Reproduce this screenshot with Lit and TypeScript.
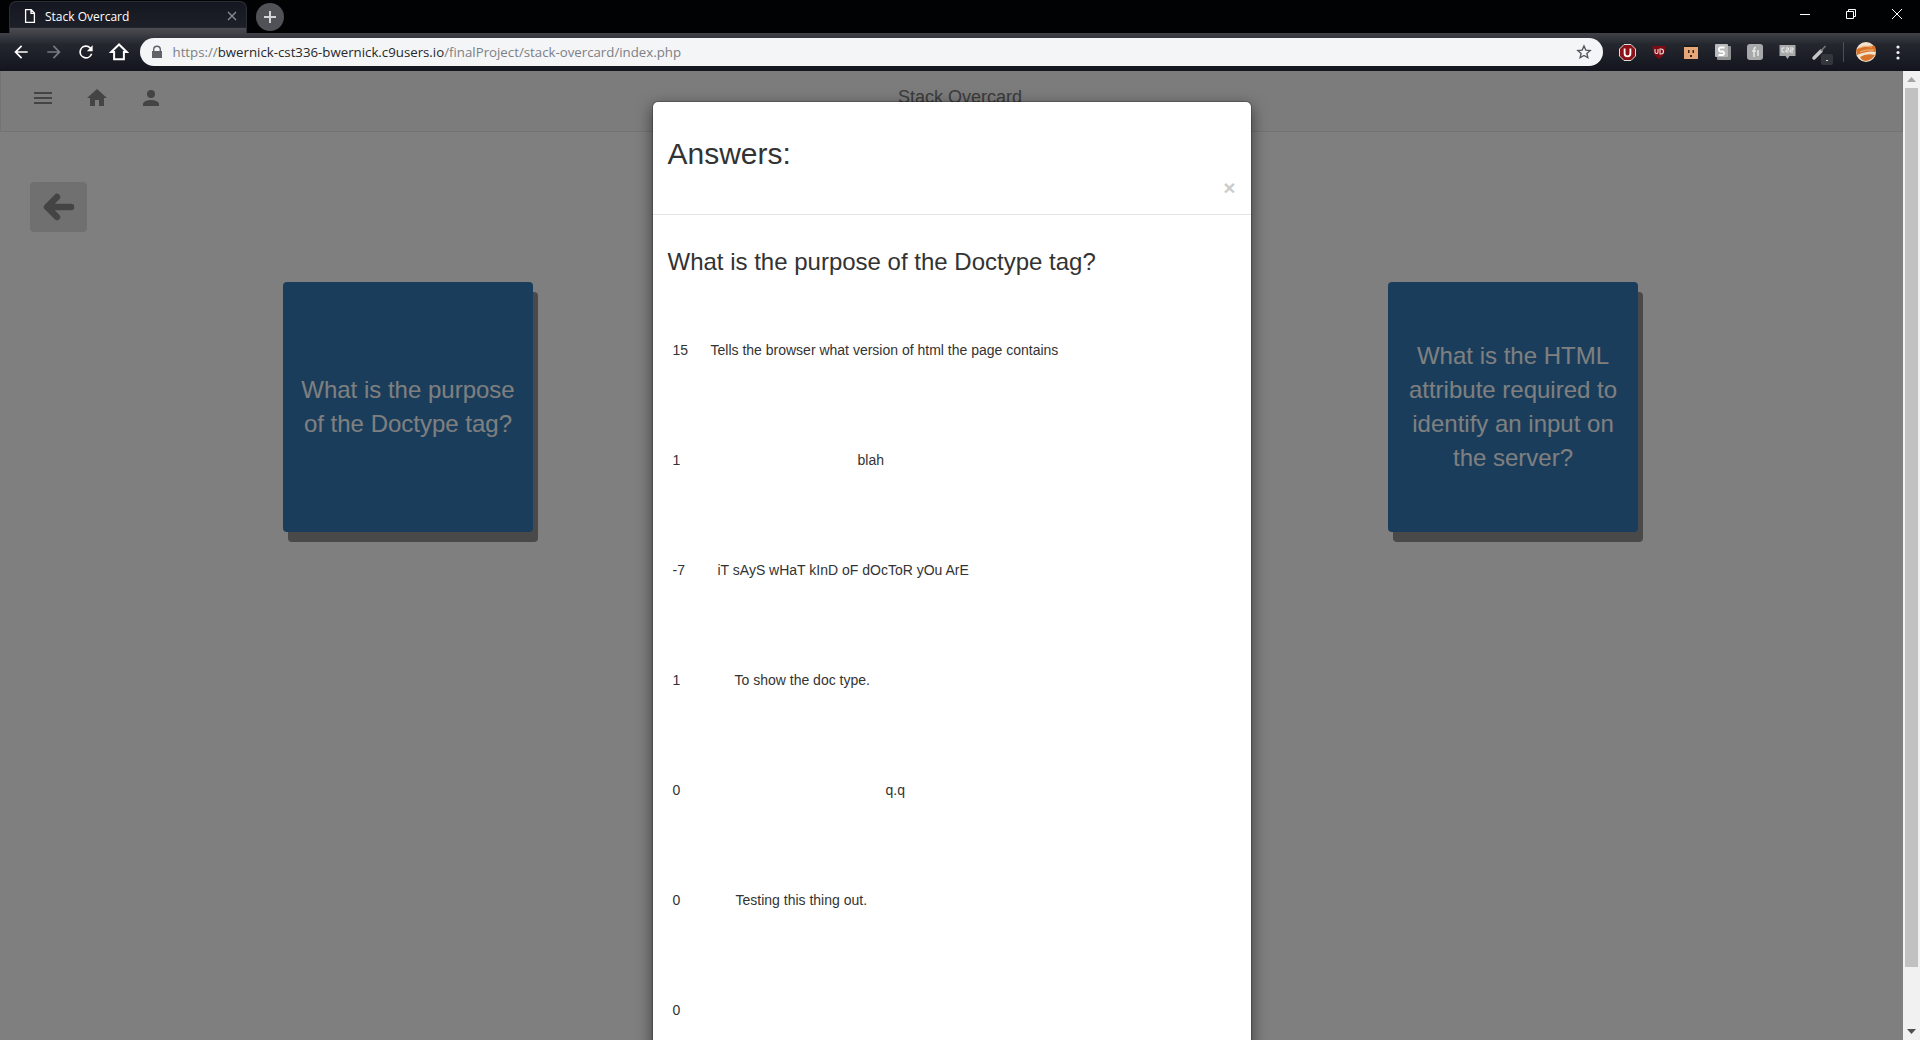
import { LitElement, html, css, svg } from 'lit';
import { customElement } from 'lit/decorators.js';

const answers = [
  { votes: '15', text: 'Tells the browser what version of html the page contains', indent: 38 },
  { votes: '1', text: 'blah', indent: 185 },
  { votes: '-7', text: 'iT sAyS wHaT kInD oF dOcToR yOu ArE', indent: 45 },
  { votes: '1', text: 'To show the doc type.', indent: 62 },
  { votes: '0', text: 'q.q', indent: 213 },
  { votes: '0', text: 'Testing this thing out.', indent: 63 },
  { votes: '0', text: '', indent: 0 },
];

const cards = [
  'What is the purpose of the Doctype tag?',
  'What is the HTML attribute required to identify an input on the server?',
];

const icon = (d: unknown, size = 24, box = 24) => html`
  <svg width=${size} height=${size} viewBox="0 0 ${box} ${box}" fill="currentColor">${d}</svg>
`;

@customElement('browser-chrome')
export class BrowserChrome extends LitElement {
  static styles = css`
    :host {
      display: block;
      font-family: 'Open Sans', 'Liberation Sans', sans-serif;
      color: #fff;
    }

    .tabstrip {
      height: 33px;
      background: #010204;
      display: flex;
      align-items: flex-end;
      padding-left: 9px;
    }

    .tab {
      width: 238px;
      height: 32px;
      box-sizing: border-box;
      background: linear-gradient(#14171f, #1d2029 82%, #4a4c52 84%, #404248);
      border-radius: 7px 7px 0 0;
      border: 1px solid #2c2f37;
      border-bottom: 0;
      display: flex;
      align-items: center;
      padding: 0 6px 3px 13px;
      gap: 8px;
      font-size: 12px;
    }

    .tab-title {
      flex: 1;
    }

    .tab-close {
      color: #8b8d93;
      display: flex;
    }

    .new-tab {
      width: 28px;
      height: 28px;
      margin: 0 0 2px 9px;
      border-radius: 50%;
      background: #505257;
      color: #d4d4d6;
      display: flex;
      align-items: center;
      justify-content: center;
    }

    .window-controls {
      margin-left: auto;
      align-self: flex-start;
      display: flex;
    }

    .window-controls div {
      width: 46px;
      height: 28px;
      display: flex;
      align-items: center;
      justify-content: center;
    }

    .toolbar {
      height: 38px;
      box-sizing: border-box;
      background: linear-gradient(#404248, #25272f 30%, #12151d);
      display: flex;
      align-items: center;
      padding-left: 11px;
    }

    .nav {
      width: 32.5px;
      display: flex;
      color: #fff;
    }

    .nav.off {
      color: #777a80;
    }

    .omnibox {
      width: 1463px;
      height: 28px;
      margin-left: -1px;
      border-radius: 14px;
      background: #f4f5f6;
      display: flex;
      align-items: center;
      padding: 0 11px;
      box-sizing: border-box;
      color: #5f6368;
      font-size: 13.25px;
      font-family: 'Open Sans', sans-serif;
    }

    .url {
      flex: 1;
      margin-left: 9.5px;
      color: #7c8085;
    }

    .url b {
      font-weight: 400;
      color: #26282b;
    }

    .extensions {
      display: flex;
      align-items: center;
      margin-left: 8px;
    }

    .ext {
      width: 32px;
      display: flex;
      justify-content: center;
    }

    .divider {
      width: 1px;
      height: 20px;
      background: #4b4e55;
      margin: 0 12px 0 8px;
    }

    .menu-dots {
      margin-left: 20px;
    }
  `;

  render() {
    return html`
      <div class="tabstrip">
        <div class="tab">
          <svg width="14" height="16" viewBox="0 0 14 16" fill="none" stroke="#fff" stroke-width="1.3">
            <path d="M2.6 1.7h5.6l3.2 3.4v9.2H2.6zM8 1.7v3.6h3.4" />
          </svg>
          <span class="tab-title">Stack Overcard</span>
          <span class="tab-close">
            <svg width="16" height="16" viewBox="0 0 16 16" fill="none" stroke="currentColor" stroke-width="1.3">
              <path d="M4 4l8 8M12 4l-8 8" />
            </svg>
          </span>
        </div>
        <div class="new-tab">
          <svg width="14" height="14" viewBox="0 0 14 14" fill="none" stroke="currentColor" stroke-width="2">
            <path d="M7 1v12M1 7h12" />
          </svg>
        </div>
        <div class="window-controls">
          <div>
            <svg width="12" height="12" viewBox="0 0 12 12" stroke="#fff"><path d="M1 6.5h10" /></svg>
          </div>
          <div>
            <svg width="12" height="12" viewBox="0 0 12 12" fill="none" stroke="#fff">
              <path d="M1.5 3.5h7v7h-7zM3.5 3.5v-2h7v7h-2" />
            </svg>
          </div>
          <div>
            <svg width="12" height="12" viewBox="0 0 12 12" fill="none" stroke="#fff"><path d="M1 1l10 10M11 1L1 11" /></svg>
          </div>
        </div>
      </div>
      <div class="toolbar">
        <span class="nav">${icon(svg`<path d="M20 11H7.8l5.6-5.6L12 4l-8 8 8 8 1.4-1.4L7.8 13H20z" />`, 20)}</span>
        <span class="nav off">${icon(svg`<path d="M4 11h12.2l-5.6-5.6L12 4l8 8-8 8-1.4-1.4 5.6-5.6H4z" />`, 20)}</span>
        <span class="nav">${icon(svg`<path d="M17.65 6.35A8 8 0 1 0 19.73 14h-2.08A6 6 0 1 1 12 6c1.66 0 3.14.69 4.22 1.78L13 11h7V4z" />`, 20)}</span>
        <span class="nav">
          <svg width="20" height="20" viewBox="0 0 18 18" fill="none" stroke="currentColor" stroke-width="1.8">
            <path d="M9 2.2L2 9h2.6v6.6h8.8V9H16z" />
          </svg>
        </span>
        <div class="omnibox">
          <svg width="12" height="14" viewBox="0 0 12 14" fill="#5f6368">
            <path d="M2 6V4.5a4 4 0 0 1 8 0V6h1v7H1V6zm1.4 0h5.2V4.5a2.6 2.6 0 0 0-5.2 0z" />
          </svg>
          <span class="url">https://<b>bwernick-cst336-bwernick.c9users.io</b>/finalProject/stack-overcard/index.php</span>
          <svg width="16" height="16" viewBox="0 0 24 24" fill="none" stroke="#50545a" stroke-width="2">
            <path d="M12 3l2.7 6.1 6.6.6-5 4.4 1.5 6.5L12 17.2 6.2 20.6l1.5-6.5-5-4.4 6.6-.6z" />
          </svg>
        </div>
        <div class="extensions">
          <span class="ext">
            <svg width="17" height="17" viewBox="0 0 17 17">
              <path d="M5 .5h7L16.5 5v7L12 16.5H5L.5 12V5z" fill="#8c1217" stroke="#ddd" />
              <path d="M5.6 4.5v5a2.9 2.9 0 0 0 5.8 0v-5" fill="none" stroke="#fff" stroke-width="1.8" />
            </svg>
          </span>
          <span class="ext">
            <svg width="16" height="16" viewBox="0 0 16 16">
              <path d="M1.5 1.5Q8 2.5 14.5 1.5 15 11 8 15 1 11 1.5 1.5z" fill="#7d0c14" />
              <path d="M4 5v3a1.5 1.5 0 0 0 3 0V5M9 5v5h1a2.5 2.5 0 0 0 0-5z" fill="none" stroke="#f3dcdc" stroke-width="1.1" />
            </svg>
          </span>
          <span class="ext">
            <svg width="16" height="16" viewBox="0 0 16 16">
              <rect x="1" y="2" width="14" height="13" fill="#e6a878" />
              <rect x="1" y="1" width="14" height="2" fill="#1b1b1b" />
              <path d="M5 6h1.5v3H5zM9.5 6H11v3H9.5zM7 11h2v2H7z" fill="#3a2417" />
            </svg>
          </span>
          <span class="ext">
            <svg width="18" height="18" viewBox="0 0 18 18">
              <rect x="3" y="3" width="14" height="14" rx="1" fill="#8f9092" />
              <rect x="1" y="1" width="13" height="13" rx="1" fill="#b9babb" />
              <path d="M10.5 4.500H6L5 5.500v2l1 1h3l1 1v1.500l-1 1H4.500" fill="none" stroke="#fff" stroke-width="1.8" />
            </svg>
          </span>
          <span class="ext">
            <svg width="16" height="16" viewBox="0 0 16 16">
              <rect width="16" height="16" rx="3" fill="#a7a8aa" />
              <path d="M7 13V6q0-2.5 2-2.5M5 7h4M11 6v6" fill="none" stroke="#e6e6e6" stroke-width="1.5" />
            </svg>
          </span>
          <span class="ext">
            <svg width="17" height="17" viewBox="0 0 17 17">
              <path d="M.5 1h16v11h-6L8.5 15l-2-3h-6z" fill="#a9aaac" />
              <path d="M3 4h2.5M3 4v4h2.5M7 4h2.5v2H7v2h2.5M11 4h3v2h-3v2h3" fill="none" stroke="#efefef" stroke-width="1" />
            </svg>
          </span>
          <span class="ext">
            <svg width="28" height="26" viewBox="0 0 28 26">
              <path d="M9 19l7-7" stroke="#c4c5c7" stroke-width="3.5" stroke-linecap="round" />
              <path d="M16 12l4.500-5" stroke="#77787b" stroke-width="1.5" />
              <rect x="16" y="15" width="12" height="11" rx="2" fill="#33363a" />
              <rect x="21" y="21" width="2" height="1" fill="#ddd" />
            </svg>
          </span>
          <span class="divider"></span>
          <svg width="20" height="20" viewBox="0 0 20 20">
            <circle cx="10" cy="10" r="10" fill="#f3e2cd" />
            <path d="M0 8Q6 3 19 4 20 8 20 10 12 8 1 13zM4 15Q10 11 19 13 16 18 10 19 6 19 4 15z" fill="#d8742a" />
            <path d="M3 6Q9 3 16 5M4 10Q10 7 18 8" fill="none" stroke="#f2b27a" />
          </svg>
          <svg class="menu-dots" width="4" height="15" viewBox="0 0 4 15" fill="#f2f2f2">
            <circle cx="2" cy="2" r="1.6" /><circle cx="2" cy="7.5" r="1.6" /><circle cx="2" cy="13" r="1.6" />
          </svg>
        </div>
      </div>
    `;
  }
}

@customElement('app-root')
export class AppRoot extends LitElement {
  static styles = css`
    :host {
      display: block;
      width: 1920px;
      height: 1040px;
      overflow: hidden;
      font-family: 'Liberation Sans', Arial, sans-serif;
      color: #333;
      background: #fff;
    }

    .viewport {
      display: flex;
      height: 969px;
    }

    .page {
      position: relative;
      flex: 1;
      overflow: hidden;
      background: #fff;
    }

    .navbar {
      height: 61px;
      box-sizing: border-box;
      background: #f8f8f8;
      border: 1px solid #e7e7e7;
      border-top: 0;
      position: relative;
      display: flex;
      padding: 15px 0 0 30px;
      gap: 30px;
      color: #888;
    }

    .brand {
      position: absolute;
      left: 897px;
      top: 15px;
      font-size: 18px;
      line-height: 22px;
      color: #777;
    }

    .content {
      padding: 50px 0 0 30px;
    }

    .back {
      width: 57px;
      height: 50px;
      background: #e0e0e0;
      border-radius: 4px;
      display: flex;
      align-items: center;
      justify-content: center;
      color: #888;
    }

    .cards {
      display: flex;
      padding-left: 253px;
      gap: 855px;
      margin-top: 50px;
    }

    .card {
      width: 250px;
      height: 250px;
      flex: none;
      box-sizing: border-box;
      padding: 0 15px;
      border-radius: 4px;
      background: #337ab7;
      box-shadow: 5px 10px 0 #939393;
      color: #fff;
      font-size: 24px;
      line-height: 34px;
      text-align: center;
      display: flex;
      align-items: center;
      justify-content: center;
    }

    .backdrop {
      position: absolute;
      inset: 0;
      background: rgba(0, 0, 0, 0.5);
    }

    .modal {
      position: absolute;
      left: 651.5px;
      top: 30px;
      width: 600px;
      box-sizing: border-box;
      background: #fff;
      border: 1px solid rgba(0, 0, 0, 0.2);
      border-radius: 6px;
      box-shadow: 0 5px 15px rgba(0, 0, 0, 0.5);
      background-clip: padding-box;
    }

    .modal-header {
      padding: 15px;
      border-bottom: 1px solid #e5e5e5;
      height: 113px;
      box-sizing: border-box;
    }

    .modal-header h3 {
      margin: 20px 0 10px;
      font-size: 30px;
      font-weight: 500;
      line-height: 33px;
    }

    .close {
      float: right;
      margin-top: -3px;
      font-size: 21px;
      font-weight: 700;
      line-height: 21px;
      color: #000;
      opacity: 0.2;
    }

    .modal-body {
      padding: 30px 15px 0;
    }

    .question {
      margin: 0;
      font-size: 24px;
      font-weight: 500;
      line-height: 34px;
    }

    .answers {
      margin-top: 61px;
    }

    .answer {
      height: 110px;
      display: flex;
      font-size: 14px;
      line-height: 20px;
      padding-left: 5px;
    }

    .votes {
      width: 0;
      white-space: nowrap;
    }

    .scrollbar {
      width: 17px;
      background: #f1f1f1;
      display: flex;
      flex-direction: column;
      align-items: center;
    }

    .arrow {
      height: 17px;
      display: flex;
      align-items: center;
      color: #a3a3a3;
    }

    .arrow.down {
      margin-top: auto;
      color: #505050;
    }

    .thumb {
      width: 13px;
      height: 879px;
      background: #c1c1c1;
    }
  `;

  render() {
    return html`
      <browser-chrome></browser-chrome>
      <div class="viewport">
        <div class="page">
          <nav class="navbar">
            ${icon(svg`<path d="M3 18h18v-2H3zm0-5h18v-2H3zm0-7v2h18V6z" />`)}
            ${icon(svg`<path d="M10 20v-6h4v6h5v-8h3L12 3 2 12h3v8z" />`)}
            ${icon(svg`<path d="M12 12a4 4 0 1 0 0-8 4 4 0 0 0 0 8zm0 2c-2.67 0-8 1.34-8 4v2h16v-2c0-2.66-5.33-4-8-4z" />`)}
            <span class="brand">Stack Overcard</span>
          </nav>
          <div class="content">
            <div class="back">
              <svg width="32" height="30" viewBox="0 0 32 30" fill="none" stroke="currentColor" stroke-width="6.5" stroke-linecap="round" stroke-linejoin="round">
                <path d="M14 5L4 15l10 10M5 15h23" />
              </svg>
            </div>
            <div class="cards">
              ${cards.map((c) => html`<div class="card"><span>${c}</span></div>`)}
            </div>
          </div>
          <div class="backdrop"></div>
          <div class="modal">
            <div class="modal-header">
              <h3>Answers:</h3>
              <span class="close">×</span>
            </div>
            <div class="modal-body">
              <h3 class="question">What is the purpose of the Doctype tag?</h3>
              <div class="answers">
                ${answers.map(
                  (a) => html`
                    <div class="answer">
                      <span class="votes">${a.votes}</span>
                      <span style="margin-left:${a.indent}px">${a.text}</span>
                    </div>
                  `,
                )}
              </div>
            </div>
          </div>
        </div>
        <div class="scrollbar">
          <span class="arrow">
            <svg width="9" height="5" viewBox="0 0 9 5" fill="currentColor"><path d="M4.5 0L9 5H0z" /></svg>
          </span>
          <div class="thumb"></div>
          <span class="arrow down">
            <svg width="9" height="5" viewBox="0 0 9 5" fill="currentColor"><path d="M0 0h9L4.5 5z" /></svg>
          </span>
        </div>
      </div>
    `;
  }
}
